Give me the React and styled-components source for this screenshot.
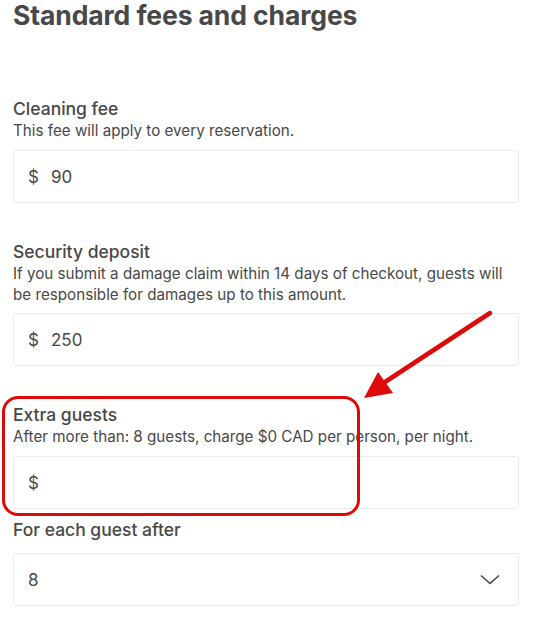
import React from "react";
import styled, { createGlobalStyle } from "styled-components";

const GlobalStyle = createGlobalStyle`
  html, body {
    margin: 0;
    padding: 0;
    background: #ffffff;
  }
  body {
    font-family: "Inter", "Noto Sans", sans-serif;
    color: #484848;
  }
`;

const Page = styled.div`
  position: relative;
  width: 556px;
  height: 618px;
  overflow: hidden;
  padding: 0 37px 0 13px;
  box-sizing: border-box;
`;

const Title = styled.h1`
  margin: 0;
  font-size: 26.5px;
  line-height: 30px;
  font-weight: 700;
  letter-spacing: -0.1px;
  color: #484848;
`;

const Field = styled.div`
  margin-top: ${(p) => p.$top}px;
`;

const Label = styled.div`
  font-size: 17.5px;
  line-height: 22px;
  font-weight: 500;
  color: #484848;
`;

const Hint = styled.div`
  font-size: 15.2px;
  line-height: 21px;
  font-weight: 400;
  color: #484848;
`;

const InputBox = styled.div`
  margin-top: ${(p) => p.$top || 9}px;
  height: 53px;
  border: 1px solid #ebebeb;
  border-radius: 3px;
  box-sizing: border-box;
  display: flex;
  align-items: center;
  padding: 0 18px 0 14px;
  font-size: 17px;
  color: #484848;
`;

const Currency = styled.span`
  width: 23px;
`;

const Value = styled.span`
  flex: 1;
`;

const Highlight = styled.div`
  position: absolute;
  left: 2px;
  top: 396px;
  width: 358px;
  height: 120px;
  border: 3.5px solid #dd0a0a;
  border-radius: 16px;
  box-sizing: border-box;
  pointer-events: none;
`;

const Arrow = styled.svg`
  position: absolute;
  left: 350px;
  top: 300px;
  pointer-events: none;
`;

const Chevron = () => (
  <svg width="20" height="11" viewBox="0 0 20 11">
    <path d="M1 1.5 L10 9.5 L19 1.5" fill="none" stroke="#484848" strokeWidth="1.6" />
  </svg>
);

export default function App() {
  return (
    <>
      <GlobalStyle />
      <Page>
        <Title>Standard fees and charges</Title>

        <Field $top={68}>
          <Label>Cleaning fee</Label>
          <Hint>This fee will apply to every reservation.</Hint>
          <InputBox>
            <Currency>$</Currency>
            <Value>90</Value>
          </InputBox>
        </Field>

        <Field $top={38}>
          <Label>Security deposit</Label>
          <Hint>
            If you submit a damage claim within 14 days of checkout, guests will
            be responsible for damages up to this amount.
          </Hint>
          <InputBox $top={8}>
            <Currency>$</Currency>
            <Value>250</Value>
          </InputBox>
        </Field>

        <Field $top={38}>
          <Label>Extra guests</Label>
          <Hint>After more than: 8 guests, charge $0 CAD per person, per night.</Hint>
          <InputBox>
            <Currency>$</Currency>
            <Value />
          </InputBox>
        </Field>

        <Field $top={10}>
          <Label>For each guest after</Label>
          <InputBox $top={12}>
            <Value>8</Value>
            <Chevron />
          </InputBox>
        </Field>

        <Highlight />
        <Arrow width="160" height="110" viewBox="350 300 160 110">
          <line x1="490" y1="313" x2="382" y2="384" stroke="#dd0a0a" strokeWidth="4.5" strokeLinecap="round" />
          <polygon points="364,398 378,372 393,393" fill="#dd0a0a" />
        </Arrow>
      </Page>
    </>
  );
}
